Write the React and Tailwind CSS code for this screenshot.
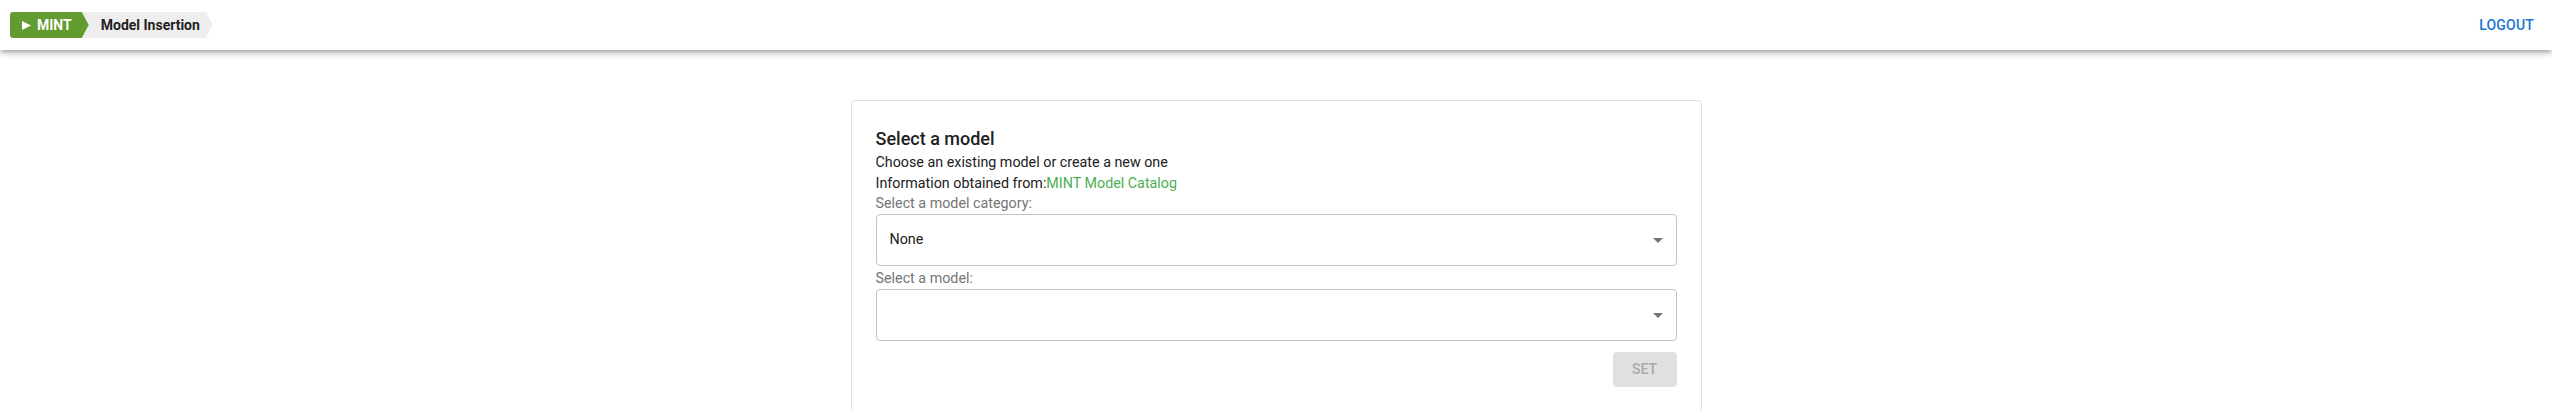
const font = { fontFamily: 'Roboto, "Liberation Sans", sans-serif' }

function Caret() {
  return (
    <svg width="10" height="5" viewBox="0 0 10 5" className="shrink-0">
      <path d="M0 0 L10 0 L5 5 Z" fill="#757575" />
    </svg>
  )
}

function SelectBox({ value }) {
  return (
    <div className="h-[52px] w-full rounded-[4px] border border-[#c2c2c2] bg-white flex items-center pl-[13px] pr-[13px]">
      <span className="flex-1 text-[14.3px] text-[#212121]">{value}</span>
      <Caret />
    </div>
  )
}

export default function App() {
  return (
    <div className="min-h-screen bg-white" style={font}>
      <header className="h-[50px] bg-white flex items-center justify-between pl-[10px] pr-[18px] relative z-10 shadow-[0_2px_4px_-1px_rgba(0,0,0,0.2),0_4px_5px_0_rgba(0,0,0,0.14),0_1px_10px_0_rgba(0,0,0,0.12)]">
        <nav className="flex items-center h-[26px]">
          <div className="relative z-10 h-full flex items-center pl-[12px] pr-[17px] bg-[#629b30] text-white text-[14px] font-bold rounded-l-[3px] [clip-path:polygon(0_0,calc(100%_-_7px)_0,100%_50%,calc(100%_-_7px)_100%,0_100%)]">
            <svg width="9" height="9" viewBox="0 0 9 9" className="mr-[6px]">
              <path d="M0 0 L9 4.5 L0 9 Z" fill="#ffffff" />
            </svg>
            MINT
          </div>
          <div className="h-full -ml-[7px] flex items-center pl-[19px] pr-[13px] bg-[#eeeeee] text-[#222] text-[14px] font-bold [clip-path:polygon(0_0,calc(100%_-_7px)_0,100%_50%,calc(100%_-_7px)_100%,0_100%)]">
            Model Insertion
          </div>
        </nav>
        <button className="text-[14px] font-medium tracking-[0.2px] text-[#1976d2] uppercase">
          Logout
        </button>
      </header>

      <main className="flex justify-center pt-[50px]">
        <section className="w-[851px] border border-[#e0e0e0] rounded-[4px] px-[24px] pt-[26px] pb-[24px]">
          <h2 className="text-[18px] font-medium leading-[24px] text-[#212121]">Select a model</h2>
          <div className="mt-[1px] text-[14.3px] leading-[21px] text-[#212121]">
            <p>Choose an existing model or create a new one</p>
            <p>
              Information obtained from:<span className="text-[#4caf50]">MINT Model Catalog</span>
            </p>
          </div>
          <label className="block text-[14.3px] leading-[19px] text-[#757575]">Select a model category:</label>
          <div className="mt-[1px]">
            <SelectBox value="None" />
          </div>
          <label className="block mt-[3px] text-[14.3px] leading-[19px] text-[#757575]">Select a model:</label>
          <div className="mt-[1px]">
            <SelectBox value="" />
          </div>
          <div className="flex justify-end mt-[11px]">
            <button className="h-[35px] w-[64px] rounded-[4px] bg-[#e0e0e0] text-[#a9a9a9] text-[14px] font-medium uppercase">
              Set
            </button>
          </div>
        </section>
      </main>
    </div>
  )
}
